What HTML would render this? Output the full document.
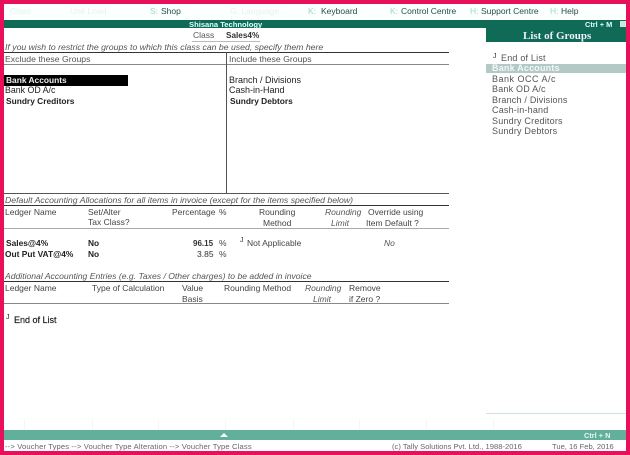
<!DOCTYPE html>
<html><head><meta charset="utf-8">
<style>
html,body{margin:0;padding:0;background:#fff}
#p{position:relative;width:630px;height:455px;background:#fff;overflow:hidden;font-family:"Liberation Sans",sans-serif;font-size:8.5px;color:#444;filter:blur(.3px)}
#p div{position:absolute;white-space:nowrap}
.t{line-height:11px}
.b{font-weight:bold;color:#222;font-size:8.4px}
.i{font-style:italic;color:#555}
.r{background:#333;height:1px}
.g{background:#888;height:1px}
.m{top:5px;font-size:8.5px;line-height:12px;color:#24504a}
.k{color:#9dd8c4}
.l{left:492px;font-size:9px;color:#555;letter-spacing:.2px;line-height:11px}
.v{top:420px;width:1px;height:10px;background:#eef8f5}
</style></head><body>
<div id="p">
<div style="left:4px;top:4px;width:622px;height:15px;background:#fbfffd"></div>
<div class="m" style="left:10px;color:#e4f4ee">Class</div>
<div class="m" style="left:70px;color:#e4f4ee">Unit Load</div>
<div class="m k" style="left:150px">S:</div><div class="m" style="left:161px">Shop</div>
<div class="m" style="left:230px;color:#e4f4ee">G: Language</div>
<div class="m k" style="left:308px">K:</div><div class="m" style="left:321px">Keyboard</div>
<div class="m k" style="left:390px">K:</div><div class="m" style="left:401px">Control Centre</div>
<div class="m k" style="left:470px">H:</div><div class="m" style="left:481px">Support Centre</div>
<div class="m k" style="left:550px">H:</div><div class="m" style="left:561px">Help</div>

<div style="left:4px;top:20px;width:622px;height:8px;background:#0f6b55"></div>
<div class="b" style="left:189px;top:20px;font-size:7.6px;line-height:9px;color:#dff">Shisana Technology</div>
<div class="b" style="left:585px;top:20px;font-size:7.4px;line-height:9px;color:#dff">Ctrl + M</div>
<div style="left:620px;top:21px;width:6px;height:6px;background:#cfe5df"></div>

<div class="t" style="left:193px;top:30px;color:#555">Class</div>
<div class="t" style="left:226px;top:30px;color:#333;font-weight:bold;font-size:8.2px">Sales4%</div>
<div style="left:192px;top:41px;width:68px;height:1px;background:#bbb"></div>
<div class="t i" style="left:5px;top:42px;font-size:8.7px">If you wish to restrict the groups to which this class can be used, specify them here</div>
<div class="r" style="left:4px;top:52px;width:445px"></div>
<div class="t" style="left:5px;top:54px;font-size:8.7px;color:#555">Exclude these Groups</div>
<div class="t" style="left:229px;top:54px;font-size:8.7px;color:#555">Include these Groups</div>
<div class="g" style="left:4px;top:64px;width:445px"></div>
<div style="left:226px;top:52px;width:1px;height:141px;background:#555"></div>

<div style="left:4px;top:75px;width:124px;height:11px;background:#000"></div>
<div class="t b" style="left:6px;top:75px;color:#eee">Bank Accounts</div>
<div class="t" style="left:5px;top:85px;color:#222;font-size:8.8px">Bank OD A/c</div>
<div class="t b" style="left:6px;top:96px">Sundry Creditors</div>
<div class="t" style="left:229px;top:75px;color:#222;font-size:9px">Branch / Divisions</div>
<div class="t" style="left:229px;top:85px;color:#222;font-size:9px">Cash-in-Hand</div>
<div class="t b" style="left:230px;top:96px">Sundry Debtors</div>

<div class="g" style="left:4px;top:193px;width:445px;background:#555"></div>
<div class="t i" style="left:5px;top:195px;font-size:8.7px">Default Accounting Allocations for all items in invoice (except for the items specified below)</div>
<div class="r" style="left:4px;top:205px;width:445px;height:1px"></div>

<div class="t" style="left:5px;top:207px">Ledger Name</div>
<div class="t" style="left:88px;top:207px">Set/Alter</div>
<div class="t" style="left:88px;top:217px">Tax Class?</div>
<div class="t" style="left:172px;top:207px">Percentage</div>
<div class="t" style="left:219px;top:207px">%</div>
<div class="t" style="left:259px;top:207px">Rounding</div>
<div class="t" style="left:263px;top:218px">Method</div>
<div class="t i" style="left:325px;top:207px">Rounding</div>
<div class="t i" style="left:331px;top:218px">Limit</div>
<div class="t" style="left:368px;top:207px">Override using</div>
<div class="t" style="left:366px;top:218px">Item Default ?</div>
<div class="g" style="left:4px;top:228px;width:445px;background:#aaa"></div>

<div class="t b" style="left:6px;top:238px">Sales@4%</div>
<div class="t b" style="left:88px;top:238px">No</div>
<div class="t b" style="left:193px;top:238px;color:#333;font-size:8px">96.15</div>
<div class="t" style="left:219px;top:238px">%</div>
<div class="t" style="left:240px;top:235px;font-size:7px;color:#333">J</div>
<div class="t" style="left:247px;top:238px">Not Applicable</div>
<div class="t i" style="left:384px;top:238px">No</div>
<div class="t b" style="left:5px;top:249px">Out Put VAT@4%</div>
<div class="t b" style="left:88px;top:249px">No</div>
<div class="t" style="left:197px;top:249px;color:#333">3.85</div>
<div class="t" style="left:219px;top:249px">%</div>

<div class="t i" style="left:5px;top:271px;font-size:8.6px">Additional Accounting Entries (e.g. Taxes / Other charges) to be added in invoice</div>
<div class="r" style="left:4px;top:281px;width:445px"></div>
<div class="t" style="left:5px;top:283px">Ledger Name</div>
<div class="t" style="left:92px;top:283px">Type of Calculation</div>
<div class="t" style="left:182px;top:283px">Value</div>
<div class="t" style="left:182px;top:294px">Basis</div>
<div class="t" style="left:224px;top:283px">Rounding Method</div>
<div class="t i" style="left:305px;top:283px">Rounding</div>
<div class="t i" style="left:313px;top:294px">Limit</div>
<div class="t" style="left:349px;top:283px">Remove</div>
<div class="t" style="left:349px;top:294px">if Zero ?</div>
<div class="g" style="left:4px;top:303px;width:445px"></div>

<div class="t" style="left:6px;top:312px;font-size:7px;color:#222">J</div>
<div class="t" style="left:14px;top:315px;color:#222;font-size:9px;-webkit-text-stroke:.2px #222">End of List</div>

<div style="left:486px;top:28px;width:140px;height:14px;background:#0f6b55"></div>
<div style="left:523px;top:29px;font-family:'Liberation Serif',serif;font-weight:bold;font-size:11px;line-height:14px;color:#eef">List of Groups</div>
<div class="l" style="left:493px;top:51px;font-size:7px;color:#333">J</div>
<div class="l" style="left:501px;top:53px">End of List</div>
<div style="left:486px;top:64px;width:140px;height:9px;background:#b3c9c6"></div>
<div class="l b" style="left:492px;top:63px;color:#f4f8f8;font-size:9px">Bank Accounts</div>
<div class="l" style="top:74px;letter-spacing:.5px">Bank OCC A/c</div>
<div class="l" style="top:84px">Bank OD A/c</div>
<div class="l" style="top:95px">Branch / Divisions</div>
<div class="l" style="top:105px">Cash-in-hand</div>
<div class="l" style="top:116px">Sundry Creditors</div>
<div class="l" style="top:126px">Sundry Debtors</div>
<div style="left:486px;top:413px;width:140px;height:1px;background:#cfe3dd"></div>

<div class="v" style="left:24px"></div><div class="v" style="left:92px"></div><div class="v" style="left:158px"></div><div class="v" style="left:225px"></div><div class="v" style="left:293px"></div><div class="v" style="left:359px"></div><div class="v" style="left:426px"></div><div class="v" style="left:493px"></div>

<div style="left:4px;top:430px;width:622px;height:10px;background:#62b09c"></div>
<div style="left:220px;top:433px;width:0;height:0;border-left:4px solid transparent;border-right:4px solid transparent;border-bottom:4px solid #fff"></div>
<div class="b" style="left:584px;top:431px;font-size:7.4px;line-height:9px;color:#e6f6f2">Ctrl + N</div>
<div class="t" style="left:5px;top:442px;font-size:7.6px;line-height:9px;color:#666;letter-spacing:.15px">--&gt; Voucher Types --&gt; Voucher Type Alteration --&gt; Voucher Type Class</div>
<div class="t" style="left:392px;top:442px;font-size:7.6px;line-height:9px;color:#666">(c) Tally Solutions Pvt. Ltd., 1988-2016</div>
<div class="t" style="left:552px;top:442px;font-size:7.6px;line-height:9px;color:#666">Tue, 16 Feb, 2016</div>

<div style="left:0;top:0;width:630px;height:4px;background:#e8105a"></div>
<div style="left:0;top:451px;width:630px;height:4px;background:#e8105a"></div>
<div style="left:0;top:0;width:4px;height:455px;background:#e8105a"></div>
<div style="left:626px;top:0;width:4px;height:455px;background:#e8105a"></div>
</div>
</body></html>
